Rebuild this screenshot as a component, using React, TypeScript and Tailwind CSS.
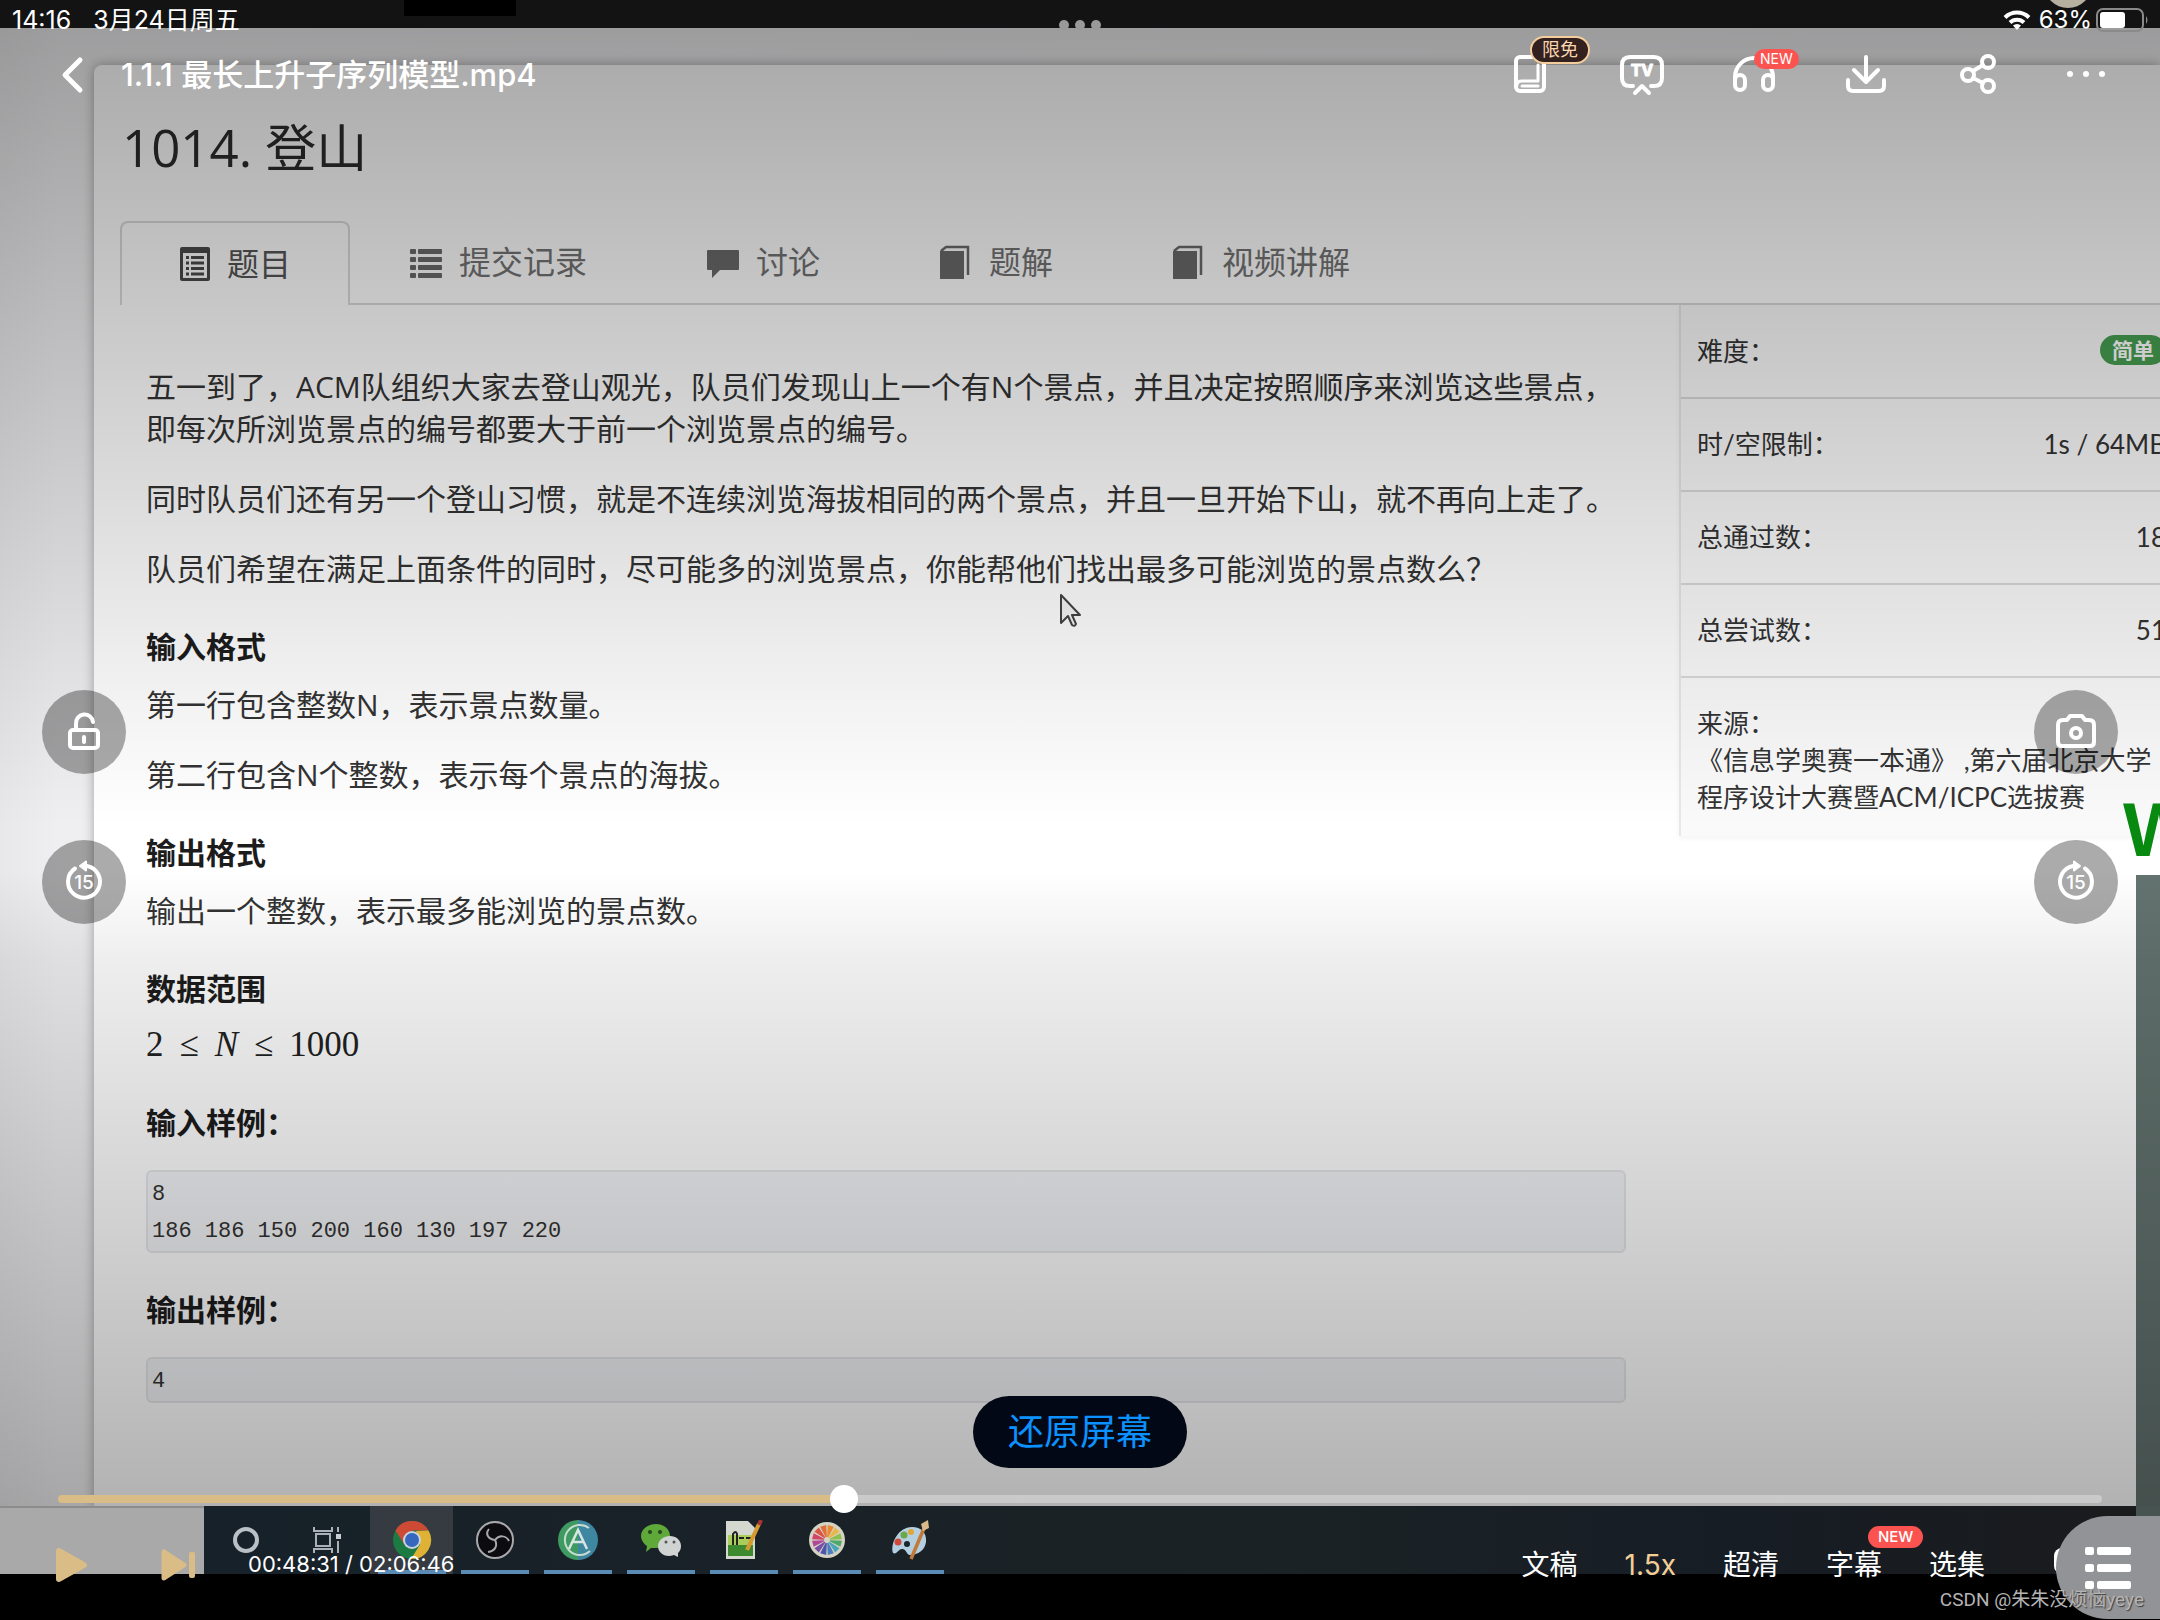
import React, { useState } from "react";

const samples = [
  { title: "输入样例：", body: "8\n186 186 150 200 160 130 197 220" },
  { title: "输出样例：", body: "4" },
];

/* ---------- page icons ---------- */

function ListAltIcon() {
  return (
    <svg viewBox="0 0 32 34" className="h-[34px] w-8 shrink-0" fill="#4a4a4a">
      <path fillRule="evenodd" d="M3 0h26a2 2 0 0 1 2 2v30a2 2 0 0 1-2 2H3a2 2 0 0 1-2-2V2a2 2 0 0 1 2-2zm1 6v25h24V6z" />
      <path d="M7 9h3v3H7zM12 9h13v3H12zM7 14.500h3v3H7zM12 14.500h13v3H12zM7 20h3v3H7zM12 20h13v3H12zM7 25.500h3v3H7zM12 25.500h13v3H12z" />
    </svg>
  );
}

function ListIcon() {
  return (
    <svg viewBox="0 0 32 34" className="h-[34px] w-8 shrink-0" fill="#6a6a6a">
      {[4, 12, 20, 28].map((y) => (
        <g key={y}>
          <rect x="0" y={y} width="6" height="5" rx="1" />
          <rect x="8" y={y} width="24" height="5" rx="1" />
        </g>
      ))}
    </svg>
  );
}

function CommentIcon() {
  return (
    <svg viewBox="0 0 32 34" className="h-[34px] w-8 shrink-0" fill="#6a6a6a">
      <path d="M1 5h30a1 1 0 0 1 1 1v18a1 1 0 0 1-1 1H13L5 33V25H1a1 1 0 0 1-1-1V6a1 1 0 0 1 1-1z" />
    </svg>
  );
}

function BookIcon() {
  return (
    <svg viewBox="0 0 32 34" className="h-[34px] w-8 shrink-0" fill="#6a6a6a">
      <path d="M0 6h24v28H0z" />
      <path d="M1 6 6 2h22v28" fill="none" stroke="#6a6a6a" strokeWidth="2.500" />
    </svg>
  );
}

/* ---------- taskbar icons ---------- */

function TaskIcon({ children }: { children: React.ReactNode }) {
  return (
    <svg viewBox="0 0 40 40" className="size-10">
      {children}
    </svg>
  );
}

const wheel = ["#e8892f", "#e9b64a", "#8fbf4f", "#4fa86a", "#4aa5b8", "#4a7fc0", "#4b57a8", "#7a4fa5", "#b04a98", "#d0466a", "#dc5648", "#e26f3a"];

function wedge(i: number) {
  const a = ((i * 30 - 90 + 3) * Math.PI) / 180;
  const b = ((i * 30 - 90 + 27) * Math.PI) / 180;
  const p = (t: number, r: number) => `${20 + r * Math.cos(t)} ${20 + r * Math.sin(t)}`;
  return `M${p(a, 3)} L${p(a, 15)} L${p(b, 15)} L${p(b, 3)}Z`;
}

const tasks: { name: string; open?: boolean; active?: boolean; icon: React.ReactNode }[] = [
  { name: "Cortana", icon: <circle cx="20" cy="20" r="11" fill="none" stroke="#b9c0c6" strokeWidth="4" /> },
  {
    name: "任务视图",
    icon: (
      <g fill="none" stroke="#aab2b8" strokeWidth="2">
        <path d="M5 7v4h18V7M5 33v-4h18v4M7 14h14v12H7zM29 7v5M29 21v12" />
        <path d="M27 14h5v5h-5z" fill="#c9ced2" stroke="none" />
      </g>
    ),
  },
  {
    name: "Chrome",
    open: true,
    active: true,
    icon: (
      <g>
        <circle cx="20" cy="20" r="19" fill="#1c7a43" />
        <path d="M3.500 10.500A19 19 0 0 1 36.500 10.500H20L12 24z" fill="#cf4a35" />
        <path d="M36.500 10.500A19 19 0 0 1 19 39L28 24.500 24 11z" fill="#dfb236" />
        <circle cx="20" cy="20" r="9" fill="#c9d3df" />
        <circle cx="20" cy="20" r="7" fill="#3467bd" />
      </g>
    ),
  },
  {
    name: "OBS",
    open: true,
    icon: (
      <g>
        <circle cx="20" cy="20" r="18" fill="#0b0b10" stroke="#a9a9ad" strokeWidth="2" />
        <g fill="none" stroke="#a9a9ad" strokeWidth="2">
          <path d="M20 20c-7-1-10-6-6-11" />
          <path d="M20 20c4-5 11-5 14 1" />
          <path d="M20 20c3 6 0 11-7 12" />
        </g>
      </g>
    ),
  },
  {
    name: "AcWing",
    open: true,
    icon: (
      <g>
        <path d="M20 0a20 20 0 0 0 0 40z" fill="#3f9a62" />
        <path d="M20 0a20 20 0 0 1 0 40z" fill="#3f86a0" />
        <path d="M31 8A15 15 0 1 0 32 31" fill="none" stroke="#c8dcd4" strokeWidth="2" />
        <path d="m11 29 9-19 9 19M14 22h11" fill="none" stroke="#d8e6e0" strokeWidth="2.500" />
      </g>
    ),
  },
  {
    name: "微信",
    open: true,
    icon: (
      <g>
        <path d="M15 4c8 0 14 5 14 12s-6 12-14 12l-5 0-5 4 1-6C3 24 0 20 0 16 0 9 7 4 15 4z" fill="#5fa83a" />
        <path d="M29 16c6 0 11 4 11 10 0 3-1 5-3 7l0 4-4-2c-9 3-16-2-16-9 0-6 6-10 12-10z" fill="#cfd3d2" />
        <circle cx="9" cy="12" r="2" fill="#26451c" />
        <circle cx="19" cy="12" r="2" fill="#26451c" />
        <circle cx="25" cy="22" r="1.500" fill="#555" />
        <circle cx="33" cy="22" r="1.500" fill="#555" />
      </g>
    ),
  },
  {
    name: "Notepad++",
    open: true,
    icon: (
      <g>
        <path d="M2 1h22l7 7v31H2z" fill="#d4d8cf" />
        <path d="M4 15h25v10H4z" fill="#a9cf5a" />
        <path d="M4 25h25v11H4z" fill="#3d8a2e" />
        <path d="M9 25V14q3-4 4 0v11M15 18h5M22 18h5" fill="none" stroke="#222" strokeWidth="2" />
        <path d="m35 4-12 26" stroke="#d89a30" strokeWidth="4" />
        <path d="m37 0-2 5" stroke="#a33" strokeWidth="4" />
      </g>
    ),
  },
  {
    name: "色轮",
    open: true,
    icon: (
      <g>
        <circle cx="20" cy="20" r="18" fill="#d5d3c4" />
        {wheel.map((c, i) => (
          <path key={c} d={wedge(i)} fill={c} />
        ))}
      </g>
    ),
  },
  {
    name: "画图",
    open: true,
    icon: (
      <g>
        <path d="M22 7c9 0 15 6 14 15-1 8-8 13-16 13-4 0-3-6-8-6-4 0-5 6-9 4C0 24 8 7 22 7z" fill="#b3cfe0" />
        <circle cx="8" cy="22" r="3.500" fill="#cf4a3a" />
        <circle cx="14" cy="15" r="3.500" fill="#6aa84a" />
        <circle cx="21" cy="12" r="3" fill="#e0a63a" />
        <circle cx="17" cy="24" r="3" fill="#17242c" />
        <path d="m35 6-14 33" stroke="#c07a3a" strokeWidth="3.500" />
        <path d="m38 0-7 4 2 7 6-3z" fill="#d9b98a" />
      </g>
    ),
  },
];

/* ---------- player pieces ---------- */

function IconButton({ label, children }: { label: string; children: React.ReactNode }) {
  return (
    <button aria-label={label} className="relative size-12">
      <svg viewBox="0 0 48 48" className="size-12" fill="none" stroke="#fff" strokeWidth="4" strokeLinecap="round" strokeLinejoin="round">
        {children}
      </svg>
    </button>
  );
}

function RoundButton({ label, children }: { label: string; children: React.ReactNode }) {
  return (
    <button aria-label={label} className="size-[84px] rounded-full bg-black/33">
      <svg viewBox="0 0 84 84" className="size-full" fill="none" stroke="#fff" strokeWidth="4" strokeLinecap="round" strokeLinejoin="round">
        {children}
      </svg>
    </button>
  );
}

function Fifteen() {
  return (
    <text x="42" y="49" textAnchor="middle" fill="#fff" stroke="none" className="font-['Inter'] text-[19px] font-medium">
      15
    </text>
  );
}

function Tab({ icon, children }: { icon: React.ReactNode; children: React.ReactNode }) {
  return (
    <a href="#" className="flex items-center gap-[17px] border-b-2 border-[#dadada] px-[60px] text-[32px] text-[#737373]">
      {icon}
      {children}
    </a>
  );
}

function InfoRow({ label, children }: { label: string; children: React.ReactNode }) {
  return (
    <tr className="h-[93px] border-b-2 border-[#dadada]">
      <th className="pl-4 text-left font-normal">{label}</th>
      <td className="text-right whitespace-nowrap">{children}</td>
    </tr>
  );
}

function Heading({ children }: { children: React.ReactNode }) {
  return <h2 className="mt-9 text-[30px] leading-[42px] font-bold text-[#1c1c1c]">{children}</h2>;
}

function ProblemPage() {
  return (
    <article className="relative mt-[37px] ml-[94px] flex-1 rounded-tl-lg bg-white text-[#333] shadow-[0_0_12px_rgba(0,0,0,0.32)]">
      <h1 className="pt-[46px] pl-7 text-[51px] leading-[72px] text-[#2c2c2c]">1014. 登山</h1>
      <nav className="mt-[38px] flex h-[84px] pl-[26px]">
        <a
          href="#"
          className="flex items-center gap-4 rounded-t-lg border-2 border-b-0 border-[#dadada] px-[57px] text-[32px] text-[#555]"
        >
          <ListAltIcon />
          题目
        </a>
        <Tab icon={<ListIcon />}>提交记录</Tab>
        <Tab icon={<CommentIcon />}>讨论</Tab>
        <Tab icon={<BookIcon />}>题解</Tab>
        <Tab icon={<BookIcon />}>视频讲解</Tab>
        <span className="flex-1 border-b-2 border-[#dadada]" />
      </nav>

      <div className="flex items-start">
        <div className="min-w-0 flex-1 pr-[53px] pl-[52px] pt-[61px] text-[30px] leading-[42px]">
          <p>
            五一到了，ACM队组织大家去登山观光，队员们发现山上一个有N个景点，并且决定按照顺序来浏览这些景点，即每次所浏览景点的编号都要大于前一个浏览景点的编号。
          </p>
          <p className="mt-7">同时队员们还有另一个登山习惯，就是不连续浏览海拔相同的两个景点，并且一旦开始下山，就不再向上走了。</p>
          <p className="mt-7">队员们希望在满足上面条件的同时，尽可能多的浏览景点，你能帮他们找出最多可能浏览的景点数么？</p>
          <Heading>输入格式</Heading>
          <p className="mt-4">第一行包含整数N，表示景点数量。</p>
          <p className="mt-7">第二行包含N个整数，表示每个景点的海拔。</p>
          <Heading>输出格式</Heading>
          <p className="mt-4">输出一个整数，表示最多能浏览的景点数。</p>
          <Heading>数据范围</Heading>
          <p className="mt-[14px] flex gap-4 font-['Liberation_Serif',serif] text-[35px] text-[#222]">
            <span>2</span>
            <span>≤</span>
            <i>N</i>
            <span>≤</span>
            <span>1000</span>
          </p>
          {samples.map((s) => (
            <section key={s.title}>
              <Heading>{s.title}</Heading>
              <pre className="mt-[26px] rounded-md border-2 border-[#e6e7ea] bg-[#f4f5f8] px-1 pt-1 pb-px font-['Liberation_Mono',monospace] text-[22px] leading-[37px]">
                {s.body}
              </pre>
            </section>
          ))}
        </div>

        <div className="-mr-[6px] w-[487px] shrink-0 border-l-2 border-[#e8e8ec] bg-[#fafafb] pb-5 font-['Lato','Noto_Sans_CJK_SC',sans-serif] text-[26px] leading-[37px] shadow-[0_2px_6px_rgba(0,0,0,0.05)]">
          <table className="w-full border-collapse">
            <tbody>
              <InfoRow label="难度：">
                <span className="mb-2 inline-block rounded-full bg-[#479e51] px-3 text-[21px] leading-[30px] font-bold text-white">简单</span>
              </InfoRow>
              <InfoRow label="时/空限制：">1s / 64MB</InfoRow>
              <InfoRow label="总通过数：">18</InfoRow>
              <InfoRow label="总尝试数：">51</InfoRow>
            </tbody>
          </table>
          <p className="pt-[27px] pl-4 whitespace-nowrap">
            来源：
            <br />
            《信息学奥赛一本通》 ,第六届北京大学
            <br />
            程序设计大赛暨ACM/ICPC选拔赛
          </p>
        </div>
      </div>
    </article>
  );
}

export default function App() {
  const total = 7606;
  const [time, setTime] = useState(2911);
  const filled = (time / total) * 100;

  return (
    <div className="relative flex min-h-screen flex-col overflow-hidden bg-black font-['Open_Sans','Noto_Sans_CJK_SC',sans-serif]">
      {/* recorded desktop */}
      <div className="relative h-7 overflow-hidden bg-[#131313]">
        <div className="absolute top-0 left-[404px] h-4 w-28 bg-black" />
        <div className="absolute -top-10 right-[68px] size-12 rounded-full bg-[#b5b0a0]" />
      </div>
      <div className="relative flex flex-1 flex-col overflow-hidden bg-[linear-gradient(90deg,#e8e8ea,#efeff1_60px,#ececee)]">
        <ProblemPage />
        <span className="absolute top-[754px] left-[2123px] text-[76px] leading-[96px] font-bold text-[#088a10] font-['Liberation_Sans',sans-serif]">
          W
        </span>
        <div className="absolute top-[847px] right-0 bottom-0 w-6 bg-[#63736f]" />
        <svg viewBox="0 0 22 34" className="absolute top-[566px] left-[1060px] h-[34px] w-[22px]" fill="#f6f6f6" stroke="#444" strokeWidth="2" strokeLinejoin="round">
          <path d="M1 1v28l7-7 4 9q3 2 4-1l-4-9h8z" />
        </svg>
        <div className="pointer-events-none absolute inset-0 bg-[linear-gradient(180deg,rgba(0,0,0,0.34),rgba(0,0,0,0.224)_18%,rgba(0,0,0,0.06)_44%,rgba(0,0,0,0)_54%,rgba(0,0,0,0)_57%,rgba(0,0,0,0.066)_63%,rgba(0,0,0,0.155)_77%,rgba(0,0,0,0.263)_94%,rgba(0,0,0,0.3))]" />
      </div>
      <div className="flex h-[68px] bg-[linear-gradient(90deg,#16212a,#1b2225_60%,#171d25_80%,#1a1b1c)]">
        <div className="w-[204px] border-t-2 border-[#8c8c8c] bg-[#a9a9a9]" />
        {tasks.map((t) => (
          <div
            key={t.name}
            title={t.name}
            className={
              t.active
                ? "relative flex w-[83px] items-center justify-center bg-[#353b41]"
                : "relative flex w-[83px] items-center justify-center"
            }
          >
            <TaskIcon>{t.icon}</TaskIcon>
            {t.open && <span className="absolute bottom-0 h-1 w-[68px] bg-[#5a8bb5]" />}
          </div>
        ))}
        <div className="ml-auto w-6 bg-[#475350]" />
      </div>
      <div className="h-[46px]" />

      {/* player controls */}
      <div className="absolute inset-0 flex flex-col font-['Inter','Noto_Sans_CJK_SC',sans-serif] text-white">
        <div className="relative flex h-10 items-center pr-[10px] pl-3 text-[25px] leading-10">
          <span>14:16</span>
          <span className="ml-[22px]">3月24日周五</span>
          <div className="absolute inset-x-0 top-5 flex justify-center gap-[6px]">
            <i className="size-[10px] rounded-full bg-[#999]" />
            <i className="size-[10px] rounded-full bg-[#999]" />
            <i className="size-[10px] rounded-full bg-[#999]" />
          </div>
          <svg viewBox="0 0 28 20" className="ml-auto h-5 w-7" fill="none" stroke="#fff" strokeWidth="4">
            <path d="M2 7.500a17 17 0 0 1 24 0" />
            <path d="M7 12.500a10 10 0 0 1 14 0" />
            <path d="m14 20-4-4.500a6 6 0 0 1 8 0z" fill="#fff" stroke="none" />
          </svg>
          <span className="ml-2 text-[24px]">63%</span>
          <svg viewBox="0 0 54 24" className="ml-1 h-6 w-[54px]">
            <rect x="1" y="1" width="46" height="22" rx="6" fill="none" stroke="#8a8a8a" strokeWidth="2" />
            <rect x="4" y="4" width="25" height="16" rx="3" fill="#fff" />
            <path d="M50 8q3 4 0 8z" fill="#8a8a8a" />
          </svg>
        </div>

        <header className="flex h-[70px] items-center pr-[46px] pl-[58px]">
          <button aria-label="返回" className="size-8">
            <svg viewBox="0 0 32 32" className="size-8 overflow-visible" fill="none" stroke="#fff" strokeWidth="5" strokeLinecap="round" strokeLinejoin="round">
              <path d="M22 1 7 16l15 15" />
            </svg>
          </button>
          <h2 className="ml-[31px] text-[31px] font-medium">1.1.1 最长上升子序列模型.mp4</h2>
          <div className="mt-1 ml-auto flex gap-16">
            <div className="relative">
              <IconButton label="文档">
                <rect x="10" y="7" width="28" height="34" rx="4" />
                <path d="M32 15v16H16q-5 0-5 4M16 36h16" strokeWidth="3" />
              </IconButton>
              <span className="absolute -top-[14px] left-6 rounded-full border-2 border-[#f3cd9c] bg-[#33211f] px-[10px] text-[18px] leading-6 whitespace-nowrap text-[#f9d5b0]">
                限免
              </span>
            </div>
            <IconButton label="投屏">
              <path d="M15 36h-3q-8 0-8-8V15q0-8 8-8h24q8 0 8 8v13q0 8-8 8h-3M17 43l7-7 7 7" />
              <text x="24" y="26" textAnchor="middle" fill="#fff" stroke="#fff" strokeWidth="1" className="text-[16px] font-bold">
                TV
              </text>
            </IconButton>
            <div className="relative">
              <IconButton label="音频">
                <path d="M5 32v-5a19 19 0 0 1 38 0v5" />
                <rect x="5" y="25" width="10" height="15" rx="5" />
                <rect x="33" y="25" width="10" height="15" rx="5" />
              </IconButton>
              <span className="absolute -top-px left-6 rounded-full bg-[#fb5450] px-[6px] text-[14px] leading-5">NEW</span>
            </div>
            <IconButton label="下载">
              <path d="M24 7v24M12 20l12 12 12-12M6 30v6q0 5 5 5h26q5 0 5-5v-6" />
            </IconButton>
            <IconButton label="分享">
              <circle cx="34" cy="12" r="6" />
              <circle cx="14" cy="25" r="6" />
              <circle cx="34" cy="36" r="6" />
              <path d="m19 21 10-6M19 28l10 5" />
            </IconButton>
            <IconButton label="更多">
              <g fill="#fff" stroke="none">
                <circle cx="4" cy="24" r="3" />
                <circle cx="20" cy="24" r="3" />
                <circle cx="36" cy="24" r="3" />
              </g>
            </IconButton>
          </div>
        </header>

        <div className="flex flex-1 justify-between px-[42px] pt-[580px]">
          <div className="flex flex-col gap-[66px]">
            <RoundButton label="锁定">
              <rect x="28" y="40" width="28" height="18" rx="3" />
              <path d="M34 40v-6a8.500 8.500 0 0 1 17-2M42 47v5" />
            </RoundButton>
            <RoundButton label="后退15秒">
              <path d="M45 26a16 16 0 1 1-12 2.500" />
              <path d="m38 26 6-4.500v9z" fill="#fff" strokeWidth="2" />
              <Fifteen />
            </RoundButton>
          </div>
          <button className="mb-[27px] h-[72px] self-end rounded-full bg-[#020816] px-[35px] text-[36px] text-[#0b92ff]">还原屏幕</button>
          <div className="flex flex-col gap-[66px]">
            <RoundButton label="截图">
              <path d="M29 30h4l3-4h12l3 4h4q5 0 5 5v17q0 4-4 4H28q-4 0-4-4V35q0-5 5-5z" />
              <circle cx="42" cy="43" r="5" />
            </RoundButton>
            <RoundButton label="前进15秒">
              <path d="M39 26a16 16 0 1 0 12 2.500" />
              <path d="m46 26-6-4.500v9z" fill="#fff" strokeWidth="2" />
              <Fifteen />
            </RoundButton>
          </div>
        </div>

        <div className="flex px-[58px]">
          <input
            type="range"
            aria-label="播放进度"
            min={0}
            max={total}
            value={time}
            onChange={(e) => setTime(Number(e.target.value))}
            style={{ backgroundImage: `linear-gradient(90deg, #dabd86 ${filled}%, rgba(255,255,255,0.3) ${filled}%)` }}
            className="h-2 w-full appearance-none rounded-full [&::-webkit-slider-thumb]:size-7 [&::-webkit-slider-thumb]:appearance-none [&::-webkit-slider-thumb]:rounded-full [&::-webkit-slider-thumb]:bg-white"
          />
        </div>

        <footer className="flex h-[117px] items-center pt-[6px] pr-[175px] pl-14">
          <button aria-label="播放">
            <svg viewBox="0 0 32 36" className="h-9 w-8" fill="#dabd86" stroke="#dabd86" strokeWidth="6" strokeLinejoin="round">
              <path d="M3 4v28l25-14z" />
            </svg>
          </button>
          <button aria-label="下一集" className="ml-[73px]">
            <svg viewBox="0 0 36 36" className="size-9" fill="#dabd86" stroke="#dabd86" strokeWidth="5" strokeLinejoin="round">
              <path d="M3 5v26l20-13z" />
              <rect x="28" y="5" width="6" height="26" rx="2" stroke="none" />
            </svg>
          </button>
          <span className="ml-[51px] text-[22px]">00:48:31 / 02:06:46</span>
          <div className="ml-auto flex gap-[47px] text-[28px]">
            <button>文稿</button>
            <button className="text-[#f3cf97]">1.5x</button>
            <button>超清</button>
            <button className="relative">
              字幕
              <span className="absolute -top-[18px] left-[42px] rounded-full bg-[#fb5450] px-[10px] text-[15px] leading-[22px] font-medium">NEW</span>
            </button>
            <button>选集</button>
          </div>
        </footer>
      </div>

      {/* floating contents button and watermark */}
      <div className="absolute right-[88px] bottom-[46px] h-[26px] w-[18px] rounded-lg bg-white" />
      <button aria-label="目录" className="absolute -right-4 bottom-px flex h-[103px] w-[120px] items-center rounded-l-full bg-[#929397] pl-[29px]">
        <svg viewBox="0 0 46 42" className="h-[42px] w-[46px]" fill="#fff">
          {[0, 17, 34].map((y) => (
            <g key={y}>
              <rect x="0" y={y} width="9" height="8" rx="2" />
              <rect x="12" y={y} width="34" height="8" rx="2" />
            </g>
          ))}
        </svg>
      </button>
      <span className="absolute right-4 bottom-[7px] font-['Roboto','Noto_Sans_CJK_SC',sans-serif] text-[19px] leading-[26px] text-[#b4b4b4] [text-shadow:1px_1px_1px_rgba(0,0,0,0.6)]">
        CSDN @朱朱没烦恼yeye
      </span>
    </div>
  );
}
